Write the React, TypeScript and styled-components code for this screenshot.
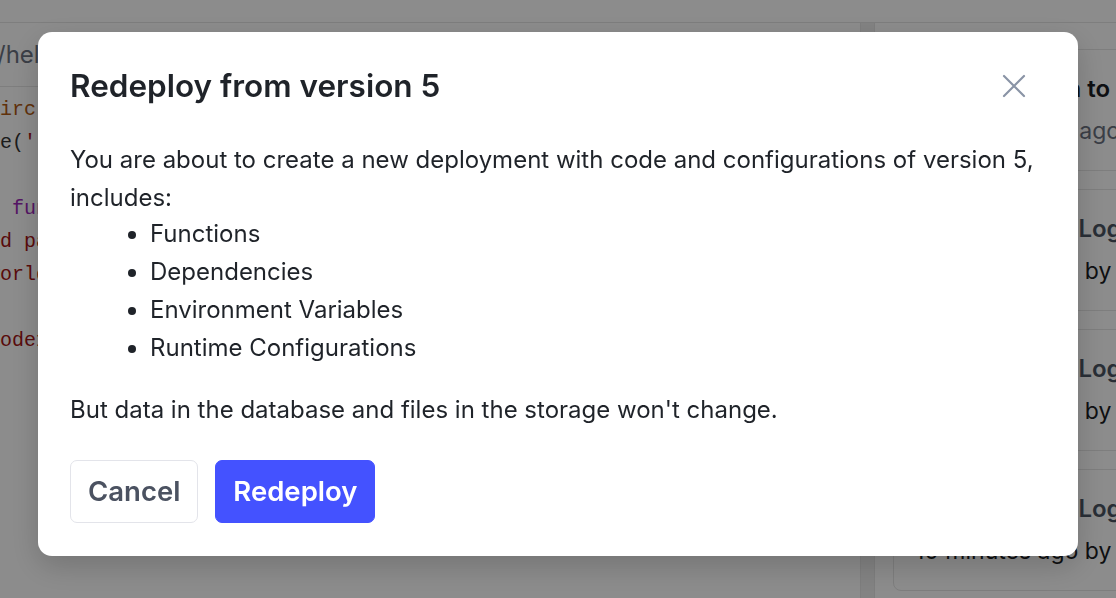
import React from 'react';
import styled, { createGlobalStyle } from 'styled-components';

const GlobalStyle = createGlobalStyle`
  html, body {
    margin: 0;
    padding: 0;
    background: #ffffff;
    font-family: Inter, "Noto Sans", sans-serif;
    overflow: hidden;
  }
  * {
    box-sizing: border-box;
  }
`;

// Page behind the dialog
const Page = styled.div`
  display: flex;
  flex-direction: column;
  width: 100vw;
  height: 100vh;
  background: #ffffff;
`;

const TopBar = styled.div`
  height: 23px;
  flex-shrink: 0;
  border-bottom: 1px solid #e6e6e6;
`;

const Workspace = styled.div`
  display: flex;
  flex: 1;
  min-height: 0;
`;

const EditorPane = styled.div`
  width: 860px;
  flex-shrink: 0;
  overflow: hidden;
`;

const PathBar = styled.div`
  height: 64px;
  display: flex;
  align-items: center;
  border-bottom: 1px solid #e6e6e6;
  color: #6b7280;
  font-size: 24px;
  overflow: hidden;
  white-space: nowrap;
`;

const PathText = styled.span`
  margin-left: -3px;
`;

const Code = styled.pre`
  margin: 6px 0 0 -168px;
  font-family: "Liberation Mono", "DejaVu Sans Mono", monospace;
  font-size: 20px;
  line-height: 33px;
  color: #333333;
`;

const Tok = styled.span<{ $c?: string }>`
  color: ${p => p.$c || '#333333'};
`;

const Splitter = styled.div`
  width: 15px;
  flex-shrink: 0;
  background: #efefef;
  border-left: 1px solid #e6e6e6;
  border-right: 1px solid #e6e6e6;
`;

const HistoryPane = styled.div`
  flex: 1;
  display: flex;
  flex-direction: column;
  gap: 18px;
  padding: 26px 0 0 18px;
  overflow: hidden;
`;

const HistoryCard = styled.div`
  width: 380px;
  flex-shrink: 0;
  border: 1px solid #e6e6e6;
  border-radius: 8px;
  padding: 20px 21px;
  white-space: nowrap;
`;

const CardTitle = styled.div<{ $dark?: boolean }>`
  font-size: 24px;
  line-height: 38px;
  font-weight: 600;
  color: ${p => (p.$dark ? '#1a1d23' : '#4b5563')};
`;

const CardMeta = styled.div<{ $muted?: boolean }>`
  margin-top: 4px;
  font-size: 23px;
  line-height: 38px;
  color: ${p => (p.$muted ? '#6b7280' : '#1a1d23')};
`;

// Dialog
const Overlay = styled.div`
  position: fixed;
  inset: 0;
  background: rgba(0, 0, 0, 0.45);
  display: flex;
  justify-content: center;
  align-items: flex-start;
  padding: 32px 38px 0;
`;

const Dialog = styled.div`
  width: 1040px;
  background: #ffffff;
  border-radius: 14px;
  padding: 32px 32px 33px;
  box-shadow: 0 10px 30px rgba(0, 0, 0, 0.18);
  color: #1f2329;
`;

const DialogHeader = styled.div`
  display: flex;
  align-items: center;
  justify-content: space-between;
  height: 44px;
`;

const DialogTitle = styled.h2`
  margin: 0;
  font-size: 31.5px;
  line-height: 38px;
  font-weight: 600;
  color: #1f2329;
`;

const CloseButton = styled.button`
  display: flex;
  align-items: center;
  justify-content: center;
  width: 36px;
  height: 36px;
  margin-right: 14px;
  padding: 0;
  border: none;
  background: transparent;
  color: #8a94a6;
  cursor: pointer;
`;

const DialogBody = styled.div`
  margin-top: 33px;
  font-size: 24px;
  line-height: 38px;
`;

const Paragraph = styled.p`
  margin: 0;
`;

const Includes = styled.ul`
  margin: -2px 0 24px;
  padding-left: 80px;
`;

const Actions = styled.div`
  display: flex;
  gap: 17px;
  margin-top: 31px;
`;

const Button = styled.button<{ $primary?: boolean }>`
  font-family: Inter, "Noto Sans", sans-serif;
  font-size: 27.5px;
  line-height: 33px;
  font-weight: 600;
  padding: 14px 17px;
  border-radius: 7px;
  border: 1px solid ${p => (p.$primary ? '#4452ff' : '#e3e4ea')};
  background: ${p => (p.$primary ? '#4452ff' : '#ffffff')};
  color: ${p => (p.$primary ? '#ffffff' : '#4b5261')};
  cursor: pointer;
`;

const codeLines: { t: string; c?: string }[][] = [
  [{ t: 'const area = ' }, { t: 'circleArea', c: '#b05a14' }, { t: '(r)' }],
  [{ t: 'const x=require(' }, { t: "'./lib'", c: '#a31515' }, { t: ')' }],
  [],
  [{ t: 'export default ', c: '#9a28b8' }, { t: 'function', c: '#9a28b8' }, { t: ' (ctx) {' }],
  [{ t: '  log(' }, { t: "'Recorded page'", c: '#a31515' }, { t: ')' }],
  [{ t: '  return ' }, { t: "'Hi world!'", c: '#a31515' }],
  [{ t: '}' }],
  [{ t: 'const rtm = ' }, { t: "'node18'", c: '#a31515' }],
];

const history = [
  { title: 'Add validation to API', meta: 'a few seconds ago', first: true },
  { title: 'Improve error Logging', meta: '10 minutes ago by admin' },
  { title: 'Improve error Logging', meta: '10 minutes ago by admin' },
  { title: 'Improve error Logging', meta: '10 minutes ago by admin' },
];

const App: React.FC = () => {
  return (
    <>
      <GlobalStyle />
      <Page>
        <TopBar />
        <Workspace>
          <EditorPane>
            <PathBar>
              <PathText>/hello-world.ts</PathText>
            </PathBar>
            <Code>
              {codeLines.map((line, i) => (
                <div key={i}>
                  {line.length === 0
                    ? ' '
                    : line.map((tok, j) => (
                        <Tok key={j} $c={tok.c}>
                          {tok.t}
                        </Tok>
                      ))}
                </div>
              ))}
            </Code>
          </EditorPane>
          <Splitter />
          <HistoryPane>
            {history.map((h, i) => (
              <HistoryCard key={i}>
                <CardTitle $dark={h.first}>{h.title}</CardTitle>
                <CardMeta $muted={h.first}>{h.meta}</CardMeta>
              </HistoryCard>
            ))}
          </HistoryPane>
        </Workspace>
      </Page>

      <Overlay>
        <Dialog role="dialog" aria-labelledby="redeploy-title">
          <DialogHeader>
            <DialogTitle id="redeploy-title">Redeploy from version 5</DialogTitle>
            <CloseButton aria-label="Close">
              <svg width="24" height="24" viewBox="0 0 24 24" fill="none">
                <path d="M2 2L22 22M22 2L2 22" stroke="currentColor" strokeWidth="2.2" strokeLinecap="round" />
              </svg>
            </CloseButton>
          </DialogHeader>
          <DialogBody>
            <Paragraph>
              You are about to create a new deployment with code and configurations of version 5, includes:
            </Paragraph>
            <Includes>
              <li>Functions</li>
              <li>Dependencies</li>
              <li>Environment Variables</li>
              <li>Runtime Configurations</li>
            </Includes>
            <Paragraph>But data in the database and files in the storage won't change.</Paragraph>
          </DialogBody>
          <Actions>
            <Button>Cancel</Button>
            <Button $primary>Redeploy</Button>
          </Actions>
        </Dialog>
      </Overlay>
    </>
  );
};

export default App;
